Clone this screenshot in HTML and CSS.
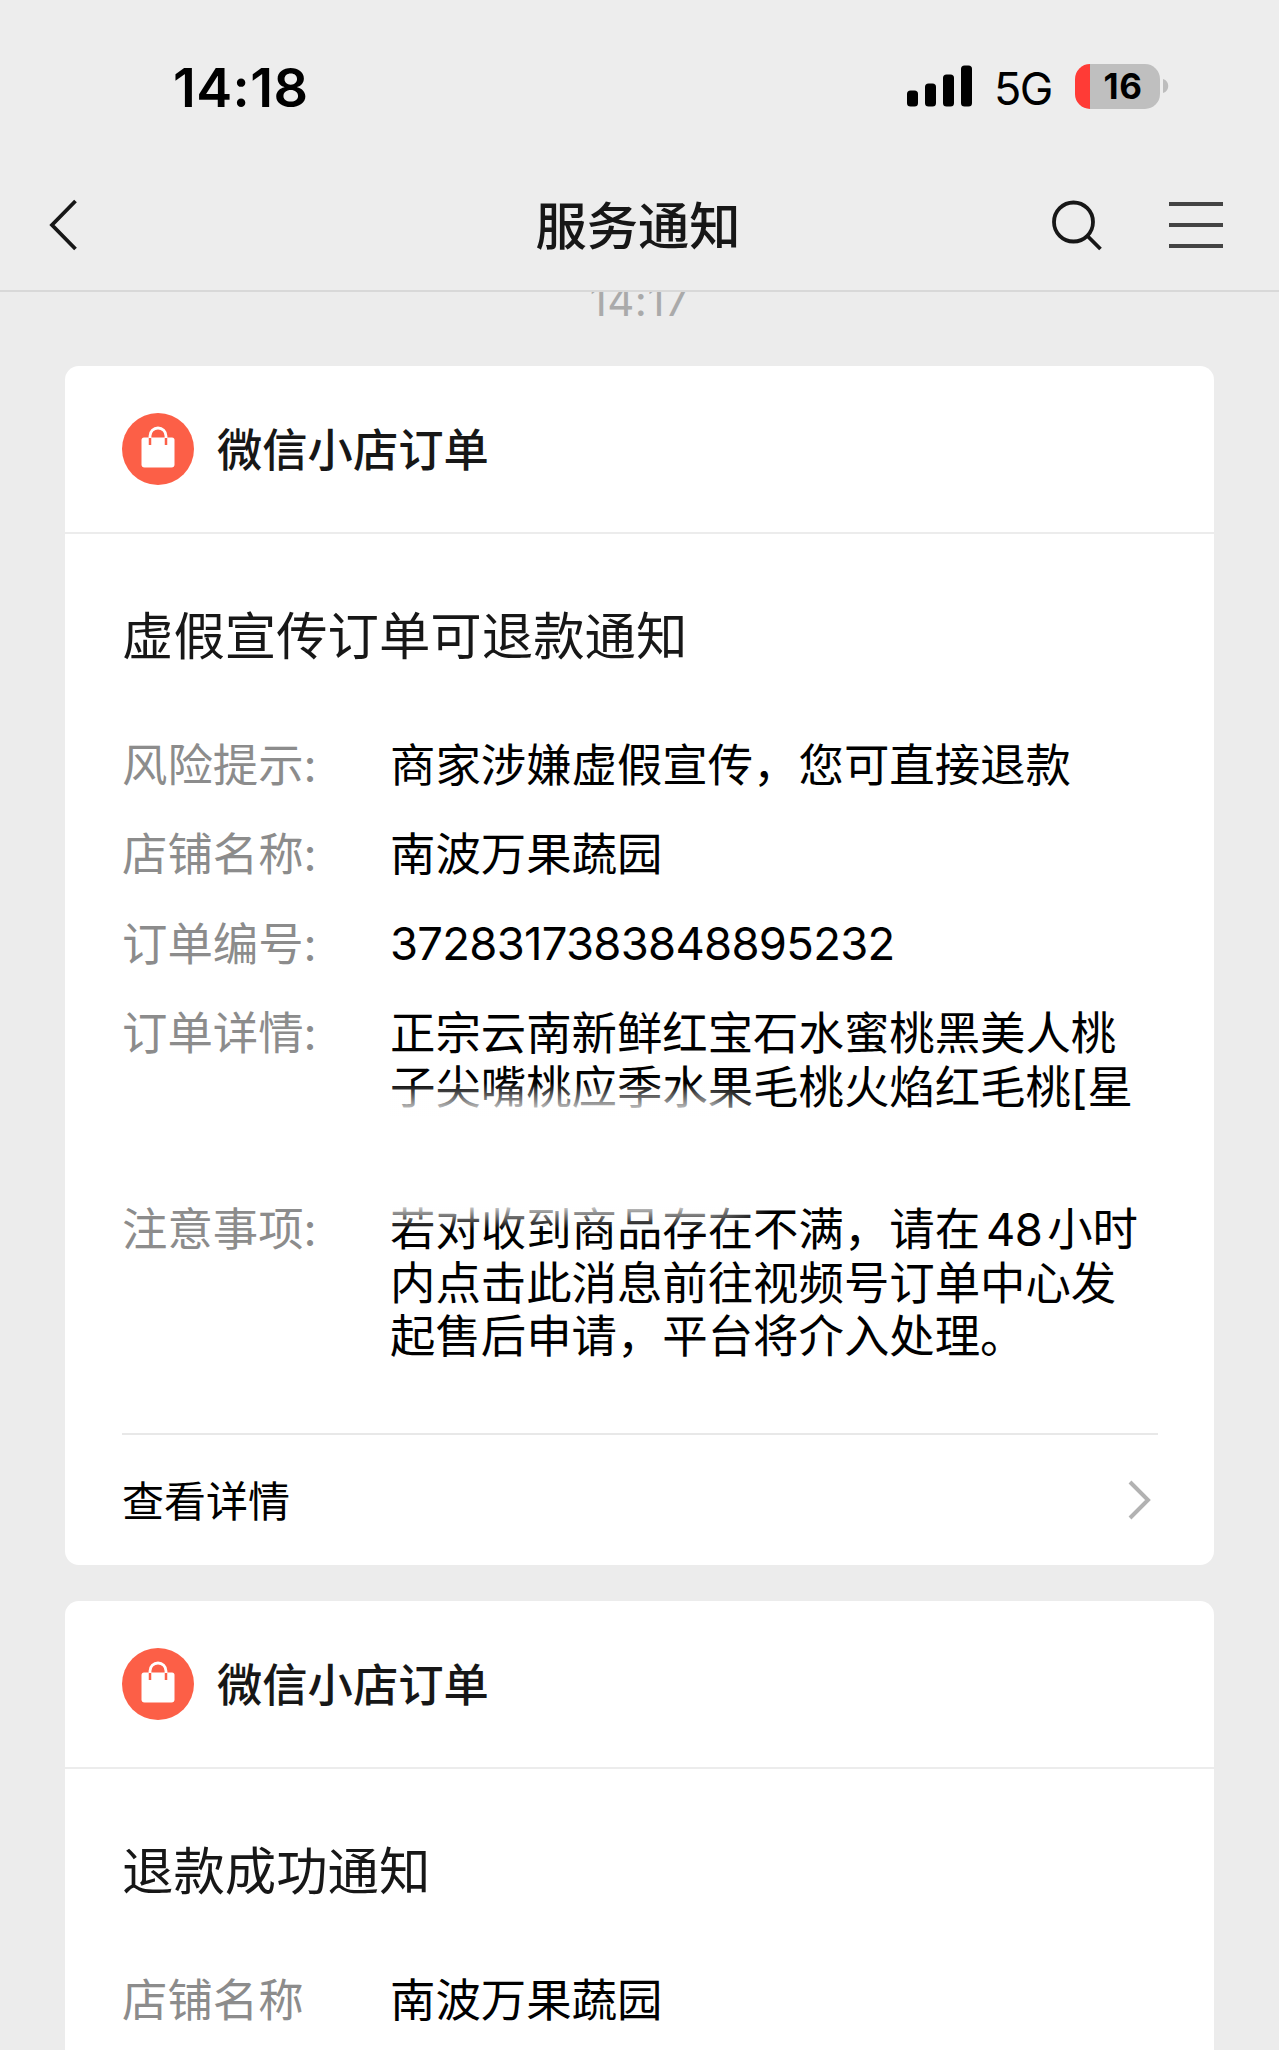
FILE: index.html
```html
<!DOCTYPE html>
<html lang="zh-CN">
<head>
    <meta charset="UTF-8">
    <title>服务通知</title>
    <link rel="stylesheet" href="styles.css">
</head>
<body>
    <!-- Status bar and navigation -->
    <header class="top">
        <div class="status-bar">
            <span class="clock">14:18</span>
            <div class="status-icons">
                <svg class="signal" width="66" height="42" viewBox="0 0 66 42">
                    <rect x="0" y="25.5" width="11" height="16" rx="3.5"/>
                    <rect x="18" y="18.5" width="11" height="23" rx="3.5"/>
                    <rect x="36" y="9.5" width="11" height="32" rx="3.5"/>
                    <rect x="54" y="0.5" width="11" height="41" rx="3.5"/>
                </svg>
                <span class="network">5G</span>
                <div class="battery"><span class="level">16</span></div>
                <svg class="battery-tip" width="6" height="14" viewBox="0 0 6 14">
                    <path d="M0 0C7 2 7 12 0 14Z" fill="#bdbdbd"/>
                </svg>
            </div>
        </div>
        <nav class="nav">
            <svg class="back" width="30" height="54" viewBox="0 0 30 54">
                <path d="M26.5 2L3 26L26.5 50"/>
            </svg>
            <h1>服务通知</h1>
            <div class="nav-actions">
                <svg width="54" height="54" viewBox="0 0 54 54">
                    <circle cx="24.5" cy="23" r="19.5"/>
                    <path d="M38.5 37L51.5 50"/>
                </svg>
                <svg class="menu" width="54" height="54" viewBox="0 0 54 54">
                    <path d="M0 5H54M0 26H54M0 47H54"/>
                </svg>
            </div>
        </nav>
    </header>

    <!-- Message list -->
    <main class="messages">
        <div class="time">14:17</div>

        <section class="card">
            <div class="card-header">
                <svg class="logo" width="72" height="72" viewBox="0 0 72 72">
                    <circle cx="36" cy="36" r="36" fill="#fc5f47"/>
                    <path d="M22 24.5H50Q52.5 24.5 52.5 27V51.5Q52.5 54.5 49.5 54.5H22.5Q19.5 54.5 19.5 51.5V27Q19.5 24.5 22 24.5Z" fill="#fff"/>
                    <path d="M28 32V24.5M44 32V24.5" stroke="#fc5f47" stroke-width="2.5"/>
                    <path d="M28 25V23A8 8 0 0 1 44 23V25" fill="none" stroke="#fff" stroke-width="2.8"/>
                </svg>
                <span class="shop">微信小店订单</span>
            </div>
            <div class="card-body">
                <h2>虚假宣传订单可退款通知</h2>
                <dl class="rows">
                    <dt>风险提示:</dt>
                    <dd>商家涉嫌虚假宣传，您可直接退款</dd>
                    <dt>店铺名称:</dt>
                    <dd>南波万果蔬园</dd>
                    <dt>订单编号:</dt>
                    <dd class="number">3728317383848895232</dd>
                    <dt>订单详情:</dt>
                    <dd class="goods">正宗云南新鲜红宝石水蜜桃黑美人桃<br>子尖嘴桃应季水果毛桃火焰红毛桃[星</dd>
                    <dt>注意事项:</dt>
                    <dd class="notice">若对收到商品存在不满，请在<span class="hours">48</span>小时<br>内点击此消息前往视频号订单中心发<br>起售后申请，平台将介入处理。</dd>
                </dl>
            </div>
            <div class="card-footer">
                <span class="more">查看详情</span>
                <svg width="24" height="42" viewBox="0 0 24 42">
                    <path d="M2 3L20 21L2 39"/>
                </svg>
            </div>
        </section>

        <section class="card card-last">
            <div class="card-header">
                <svg class="logo" width="72" height="72" viewBox="0 0 72 72">
                    <circle cx="36" cy="36" r="36" fill="#fc5f47"/>
                    <path d="M22 24.5H50Q52.5 24.5 52.5 27V51.5Q52.5 54.5 49.5 54.5H22.5Q19.5 54.5 19.5 51.5V27Q19.5 24.5 22 24.5Z" fill="#fff"/>
                    <path d="M28 32V24.5M44 32V24.5" stroke="#fc5f47" stroke-width="2.5"/>
                    <path d="M28 25V23A8 8 0 0 1 44 23V25" fill="none" stroke="#fff" stroke-width="2.8"/>
                </svg>
                <span class="shop">微信小店订单</span>
            </div>
            <div class="card-body">
                <h2>退款成功通知</h2>
                <dl class="rows">
                    <dt>店铺名称</dt>
                    <dd>南波万果蔬园</dd>
                </dl>
            </div>
        </section>
    </main>
</body>
</html>
```

FILE: styles.css
```css
/* General styles */
* {
    box-sizing: border-box;
}

body {
    margin: 0;
    height: 2050px;
    display: flex;
    flex-direction: column;
    overflow: hidden;
    background-color: #ececec;
    font-family: Inter, "Noto Sans CJK SC", sans-serif;
    color: #000;
}

h1, h2, dl, dd {
    margin: 0;
    font-weight: normal;
}

svg {
    display: block;
    flex: none;
}

/* Top area */
.top {
    flex: none;
    height: 292px;
    background-color: #ededed;
    border-bottom: 2px solid #d8d8d8;
}

.status-bar {
    display: flex;
    justify-content: space-between;
    height: 172px;
    padding: 0 110px 0 173px;
}

.clock {
    font-size: 54px;
    font-weight: 600;
    line-height: 64px;
    letter-spacing: 0.4px;
    margin-top: 56px;
}

.status-icons {
    display: flex;
    align-items: center;
    height: 44px;
    margin-top: 64px;
}

.network {
    font-size: 45px;
    line-height: 44px;
    margin: 5px 0 0 21px;
    width: 81px;
    letter-spacing: -1.5px;
}

.battery {
    width: 85px;
    height: 45px;
    border-radius: 15px;
    background: linear-gradient(to right, #ff3b36 15px, #bfbfbf 15px);
    text-align: center;
}

.level {
    font-size: 35px;
    font-weight: 700;
    line-height: 45px;
    padding-left: 11px;
    letter-spacing: 0.5px;
}

.battery-tip {
    margin-left: 3px;
}

.nav {
    display: flex;
    justify-content: space-between;
    align-items: center;
    height: 107px;
    padding: 0 56px 0 49px;
}

.nav h1 {
    font-size: 51.3px;
    font-weight: 500;
    line-height: 60px;
    color: #171717;
    margin-left: 148px;
}

.nav svg {
    fill: none;
    stroke: #171717;
    stroke-width: 3.8;
}

.nav .menu {
    stroke: #444;
    stroke-width: 4;
}

.nav-actions {
    display: flex;
    gap: 66px;
}

/* Messages */
.messages {
    display: flex;
    flex-direction: column;
    flex: 1;
    min-height: 0;
    padding: 0 65px;
}

.time {
    flex: none;
    height: 74px;
    overflow: hidden;
    text-align: center;
    font-size: 42px;
    line-height: 18px;
    letter-spacing: 0.5px;
    color: #aaa;
}

.card {
    flex: none;
    background-color: #fff;
    border-radius: 14px;
    margin-bottom: 36px;
}

/* Runs on under the bottom of the screen */
.card-last {
    flex: 1;
    margin-bottom: 0;
    border-radius: 14px 14px 0 0;
}

.card-header {
    display: flex;
    align-items: center;
    height: 168px;
    padding: 0 57px;
    border-bottom: 2px solid #ececec;
}

.shop {
    font-size: 45.3px;
    font-weight: 500;
    color: #171717;
    margin-left: 23px;
    padding-bottom: 5px;
}

.card-body {
    padding: 71px 57px 0;
}

.card-body h2 {
    font-size: 51.4px;
    line-height: 62px;
    color: #171717;
    margin-bottom: 72px;
}

.rows {
    display: grid;
    grid-template-columns: 268px 1fr;
    row-gap: 36px;
    font-size: 45.4px;
    line-height: 53.4px;
    white-space: nowrap;
}

.rows dt {
    color: #8c8c8c;
}

.number {
    letter-spacing: -0.7px;
    margin-top: -1px;
}

/* Goods text is cut off with a soft edge */
.goods {
    position: relative;
    height: 160px;
}

.goods::after,
.notice::before {
    content: "";
    position: absolute;
    left: 0;
    width: 380px;
    -webkit-mask-image: linear-gradient(to right, #000 320px, transparent);
    mask-image: linear-gradient(to right, #000 320px, transparent);
}

.goods::after {
    top: 76px;
    height: 34px;
    background: linear-gradient(to bottom, rgba(255, 255, 255, 0), #fff);
}

.notice {
    position: relative;
}

.notice::before {
    top: -2px;
    height: 28px;
    background: linear-gradient(to top, rgba(255, 255, 255, 0), #fff);
}

.hours {
    margin: 0 5px 0 6px;
    letter-spacing: -0.65px;
}

.card-footer {
    display: flex;
    justify-content: space-between;
    align-items: center;
    height: 132px;
    margin: 70px 56px 0 57px;
    padding-right: 6px;
    border-top: 2px solid #e8e8e8;
    font-size: 42px;
}

.more {
    padding-bottom: 4px;
}

.card-footer svg {
    fill: none;
    stroke: #b2b2b2;
    stroke-width: 4;
}
```
